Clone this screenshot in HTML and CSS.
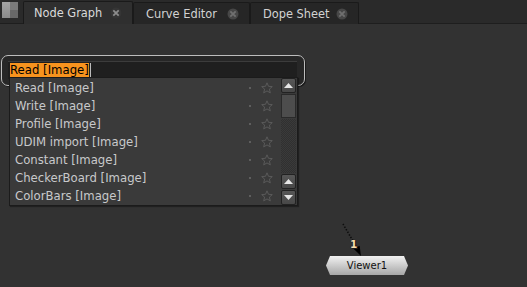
FILE: index.html
```html
<!DOCTYPE html>
<html lang="en">
<head>
    <meta charset="UTF-8">
    <title>Node Graph</title>
    <link rel="stylesheet" href="styles.css">
</head>
<body>
    <div class="tabbar">
        <div class="pane-icon"><span class="pane-left"></span><span class="pane-right"></span></div>
        <div class="tab active">
            <span class="tab-label">Node Graph</span>
            <svg class="close" width="12" height="12" viewBox="0 0 12 12"><circle cx="6" cy="6" r="5.5" fill="#353535"/><path d="M3.3 3.3 L8.7 8.7 M8.7 3.3 L3.3 8.7" stroke="#8c8c8c" stroke-width="1.8"/></svg>
        </div>
        <div class="tab">
            <span class="tab-label">Curve Editor</span>
            <svg class="close" width="12" height="12" viewBox="0 0 12 12"><circle cx="6" cy="6" r="5.5" fill="#474747"/><path d="M3.3 3.3 L8.7 8.7 M8.7 3.3 L3.3 8.7" stroke="#707070" stroke-width="1.8"/></svg>
        </div>
        <div class="tab">
            <span class="tab-label">Dope Sheet</span>
            <svg class="close" width="12" height="12" viewBox="0 0 12 12"><circle cx="6" cy="6" r="5.5" fill="#474747"/><path d="M3.3 3.3 L8.7 8.7 M8.7 3.3 L3.3 8.7" stroke="#707070" stroke-width="1.8"/></svg>
        </div>
    </div>

    <div class="graph">
        <div class="search">
            <div class="field"><span class="sel">Read [Image]</span><span class="caret"></span></div>
            <div class="menu">
                <ul class="items">
                    <li><span class="name">Read [Image]</span><span class="dot"></span><svg class="star" width="12" height="12" viewBox="0 0 12 12"><path d="M6 0.8 L7.5 4.3 L11.3 4.6 L8.4 7.1 L9.3 10.9 L6 8.9 L2.7 10.9 L3.6 7.1 L0.7 4.6 L4.5 4.3 Z" fill="none" stroke="#5a5a5a"/></svg></li>
                    <li><span class="name">Write [Image]</span><span class="dot"></span><svg class="star" width="12" height="12" viewBox="0 0 12 12"><path d="M6 0.8 L7.5 4.3 L11.3 4.6 L8.4 7.1 L9.3 10.9 L6 8.9 L2.7 10.9 L3.6 7.1 L0.7 4.6 L4.5 4.3 Z" fill="none" stroke="#5a5a5a"/></svg></li>
                    <li><span class="name">Profile [Image]</span><span class="dot"></span><svg class="star" width="12" height="12" viewBox="0 0 12 12"><path d="M6 0.8 L7.5 4.3 L11.3 4.6 L8.4 7.1 L9.3 10.9 L6 8.9 L2.7 10.9 L3.6 7.1 L0.7 4.6 L4.5 4.3 Z" fill="none" stroke="#5a5a5a"/></svg></li>
                    <li><span class="name">UDIM import [Image]</span><span class="dot"></span><svg class="star" width="12" height="12" viewBox="0 0 12 12"><path d="M6 0.8 L7.5 4.3 L11.3 4.6 L8.4 7.1 L9.3 10.9 L6 8.9 L2.7 10.9 L3.6 7.1 L0.7 4.6 L4.5 4.3 Z" fill="none" stroke="#5a5a5a"/></svg></li>
                    <li><span class="name">Constant [Image]</span><span class="dot"></span><svg class="star" width="12" height="12" viewBox="0 0 12 12"><path d="M6 0.8 L7.5 4.3 L11.3 4.6 L8.4 7.1 L9.3 10.9 L6 8.9 L2.7 10.9 L3.6 7.1 L0.7 4.6 L4.5 4.3 Z" fill="none" stroke="#5a5a5a"/></svg></li>
                    <li><span class="name">CheckerBoard [Image]</span><span class="dot"></span><svg class="star" width="12" height="12" viewBox="0 0 12 12"><path d="M6 0.8 L7.5 4.3 L11.3 4.6 L8.4 7.1 L9.3 10.9 L6 8.9 L2.7 10.9 L3.6 7.1 L0.7 4.6 L4.5 4.3 Z" fill="none" stroke="#5a5a5a"/></svg></li>
                    <li><span class="name">ColorBars [Image]</span><span class="dot"></span><svg class="star" width="12" height="12" viewBox="0 0 12 12"><path d="M6 0.8 L7.5 4.3 L11.3 4.6 L8.4 7.1 L9.3 10.9 L6 8.9 L2.7 10.9 L3.6 7.1 L0.7 4.6 L4.5 4.3 Z" fill="none" stroke="#5a5a5a"/></svg></li>
                </ul>
                <div class="scrollbar">
                    <div class="sb-btn"><svg width="9" height="5" viewBox="0 0 9 5"><path d="M0 5 L4.5 0 L9 5 Z" fill="#e6e6e6"/></svg></div>
                    <div class="sb-thumb"></div>
                    <div class="sb-track"></div>
                    <div class="sb-btn"><svg width="9" height="5" viewBox="0 0 9 5"><path d="M0 5 L4.5 0 L9 5 Z" fill="#e6e6e6"/></svg></div>
                    <div class="sb-btn"><svg width="9" height="5" viewBox="0 0 9 5"><path d="M0 0 L4.5 5 L9 0 Z" fill="#e6e6e6"/></svg></div>
                </div>
            </div>
        </div>

        <svg class="link" width="40" height="45" viewBox="0 0 40 45">
            <path d="M13 9 L26.5 32" stroke="#0d0d0d" stroke-width="1.6" stroke-dasharray="1.4 1.6" fill="none"/>
            <polygon points="31,41 29.6,30.8 23.8,34" fill="#000"/>
        </svg>
        <span class="link-label">1</span>
        <div class="node">Viewer1</div>
    </div>
</body>
</html>
```

FILE: styles.css
```css
body {
    margin: 0;
    background-color: #323232;
    font-family: "DejaVu Sans", Verdana, sans-serif;
    overflow: hidden;
}
.tabbar {
    height: 24px;
    background-color: #2a2a2a;
    border-bottom: 1px solid #1e1e1e;
    box-sizing: border-box;
    display: flex;
    align-items: flex-end;
}
.pane-icon {
    width: 16px;
    height: 16px;
    margin: 0 5px 5px 2px;
    display: flex;
}
.pane-left {
    width: 8px;
    background: linear-gradient(#a4a4a4, #8c8c8c);
}
.pane-right {
    width: 8px;
    background: linear-gradient(#7a7a7a 0, #7a7a7a 50%, #686868 50%);
}
.tab {
    height: 22px;
    box-sizing: border-box;
    display: flex;
    align-items: center;
    padding-left: 10px;
    background-color: #262626;
    border: 1px solid #1a1a1a;
    border-bottom: none;
    border-radius: 2px 2px 0 0;
    color: #d2d2d2;
    font-size: 11.4px;
    margin-bottom: -1px;
}
.tab:nth-child(2) {
    width: 110px;
}
.tab:nth-child(3) {
    width: 117px;
    padding-left: 12px;
}
.tab:nth-child(4) {
    width: 109px;
    padding-left: 12px;
}
.tab.active {
    background-color: #2f2f2f;
    height: 23px;
    color: #dadada;
}
.tab-label {
    flex: 1;
}
.close {
    margin-right: 10px;
}
.graph {
    position: relative;
    height: 263px;
    padding: 31px 0 0 1px;
    box-sizing: border-box;
}
.search {
    position: relative;
    width: 304px;
    height: 31px;
    box-sizing: border-box;
    border: 1px solid #bdbdbd;
    border-radius: 7px;
    background-color: #272727;
    padding: 5px 7px 0 6px;
    box-shadow: 1px 1px 0 #1a1a1a;
}
.field {
    height: 18px;
    background-color: #1f1f1f;
    border-top: 1px solid #3c3c3c;
    box-sizing: border-box;
    padding: 1px 0 0 2px;
    display: flex;
    align-items: flex-start;
}
.sel {
    background-color: #f7931e;
    color: #000;
    font-size: 11.7px;
    line-height: 12px;
    height: 12px;
    padding: 1px 0;
}
.caret {
    width: 1px;
    height: 14px;
    background-color: #bbb;
    margin-left: 1px;
}
.menu {
    position: absolute;
    left: 7px;
    top: 21px;
    width: 289px;
    height: 129px;
    box-sizing: border-box;
    border: 1px solid #1b1b1b;
    background-color: #3a3a3a;
    display: flex;
    box-shadow: 1px 1px 1px rgba(0, 0, 0, 0.35);
}
.items {
    list-style: none;
    margin: 0;
    padding: 1px 0 0;
    width: 271px;
}
.items li {
    height: 18px;
    display: flex;
    align-items: center;
    padding-left: 5px;
    color: #c8c9cb;
    font-size: 11.7px;
}
.name {
    flex: 1;
}
.dot {
    width: 2px;
    height: 2px;
    background-color: #5e5e5e;
    margin-right: 10px;
}
.star {
    margin-right: 8px;
}
.scrollbar {
    width: 15px;
    display: flex;
    flex-direction: column;
    gap: 1px;
}
.sb-btn {
    height: 15px;
    box-sizing: border-box;
    border: 1px solid #222;
    border-radius: 2px;
    background: linear-gradient(#575757, #484848);
    display: flex;
    align-items: center;
    justify-content: center;
}
.sb-thumb {
    height: 24px;
    box-sizing: border-box;
    border: 1px solid #2a2a2a;
    background-color: #4d4d4d;
}
.sb-track {
    flex: 1;
    background-color: #363636;
    background-image: repeating-conic-gradient(#303030 0 25%, #3a3a3a 0 50%);
    background-size: 2px 2px;
}
.link {
    position: absolute;
    left: 330px;
    top: 191px;
}
.link-label {
    position: absolute;
    left: 350px;
    top: 214px;
    z-index: 1;
    font-size: 10.5px;
    font-weight: bold;
    color: #f5dcae;
    text-shadow: 0 0 1px #000, 1px 1px 0 #222;
}
.node {
    position: absolute;
    left: 326px;
    top: 232px;
    width: 82px;
    height: 19px;
    clip-path: polygon(4px 0, 78px 0, 82px 50%, 78px 100%, 4px 100%, 0 50%);
    background: linear-gradient(#f2f2f2, #c4c4c4 60%, #a6a6a6);
    color: #111;
    font-size: 10px;
    line-height: 19px;
    text-align: center;
}
```
